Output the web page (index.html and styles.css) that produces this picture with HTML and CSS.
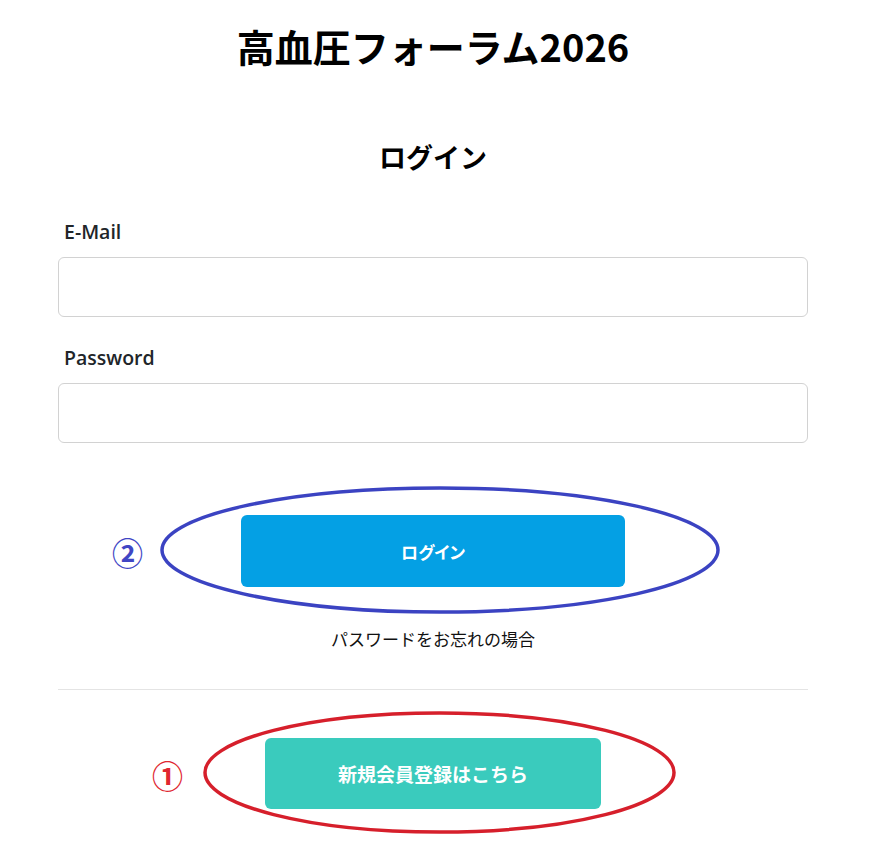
FILE: index.html
```html
<!DOCTYPE html>
<html lang="ja">
<head>
<meta charset="utf-8">
<title>高血圧フォーラム2026</title>
<link rel="stylesheet" href="styles.css">
</head>
<body>
<div class="page">
  <h1 class="title">高血圧フォーラム2026</h1>
  <h2 class="heading">ログイン</h2>
  <form class="form">
    <label class="label" for="email">E-Mail</label>
    <input class="input" id="email" type="email">
    <label class="label label-pw" for="pw">Password</label>
    <input class="input" id="pw" type="password">

    <div class="btn-wrap btn-wrap-login">
      <span class="mark mark-blue">②</span>
      <svg class="ring ring-blue" width="560" height="128" viewBox="0 0 560 128">
        <ellipse cx="280" cy="64" rx="278" ry="62" fill="none" stroke="#3b43c2" stroke-width="3.5"/>
      </svg>
      <button class="btn btn-login" type="button">ログイン</button>
    </div>
    <p class="forgot">パスワードをお忘れの場合</p>
  </form>
  <hr class="rule">
  <div class="btn-wrap btn-wrap-reg">
    <span class="mark mark-red">①</span>
    <svg class="ring ring-red" width="473" height="123" viewBox="0 0 473 123">
      <ellipse cx="236.5" cy="61.5" rx="234.5" ry="59.5" fill="none" stroke="#d61f2b" stroke-width="3.5"/>
    </svg>
    <button class="btn btn-reg" type="button">新規会員登録はこちら</button>
  </div>
</div>
</body>
</html>
```
FILE: styles.css
```css
* { box-sizing: border-box; }
html, body {
  margin: 0;
  padding: 0;
  background: #ffffff;
}
body {
  font-family: "Noto Sans CJK JP", "Noto Sans", sans-serif;
  color: #111111;
}
.page {
  width: 750px;
  margin-left: 58px;
  padding-bottom: 33px;
}
.title {
  margin: 24px 0 0;
  font-size: 38px;
  line-height: 44px;
  font-weight: 700;
  text-align: center;
  color: #000;
}
.heading {
  margin: 73px 0 0;
  font-size: 27px;
  line-height: 32px;
  font-weight: 700;
  text-align: center;
  color: #000;
}
.form {
  display: flex;
  flex-direction: column;
  margin: 0;
}
.label {
  margin-top: 47px;
  padding-left: 6px;
  font-family: "Open Sans", "Noto Sans", sans-serif;
  font-size: 19.5px;
  line-height: 24px;
  font-weight: 600;
  color: #212529;
}
.label-pw { margin-top: 29px; }
.input {
  margin-top: 13px;
  width: 750px;
  height: 60px;
  border: 1px solid #d2d2d2;
  border-radius: 6px;
  background: #fff;
  outline: none;
}
.btn-wrap {
  position: relative;
  align-self: center;
  display: flex;
}
.btn-wrap-login { margin-top: 72px; width: 384px; }
.btn-wrap-reg { margin: 48px auto 0; width: 336px; }
.btn {
  border: none;
  border-radius: 6px;
  color: #ffffff;
  font-family: "Noto Sans CJK JP", sans-serif;
  font-weight: 700;
  cursor: pointer;
}
.btn-login {
  width: 384px;
  height: 72px;
  background: #04a0e4;
  font-size: 17px;
  font-feature-settings: "palt";
}
.btn-reg {
  width: 336px;
  height: 71px;
  background: #3acbbd;
  font-size: 19px;
}
.ring {
  position: absolute;
  pointer-events: none;
}
.ring-blue { left: -81px; top: -29px; }
.ring-red { left: -62px; top: -27px; }
.mark {
  position: absolute;
  top: 50%;
  transform: translateY(-50%);
  font-size: 31px;
  line-height: 31px;
  font-weight: 700;
}
.mark-blue { left: -129px; color: #4046c4; }
.mark-red { left: -113px; color: #e0262f; }
.forgot {
  margin: 40px 0 0;
  text-align: center;
  font-size: 17px;
  line-height: 24px;
  color: #111;
}
.rule {
  margin: 38px 0 0;
  border: none;
  border-top: 1px solid #e4e4e4;
  height: 0;
}
```
